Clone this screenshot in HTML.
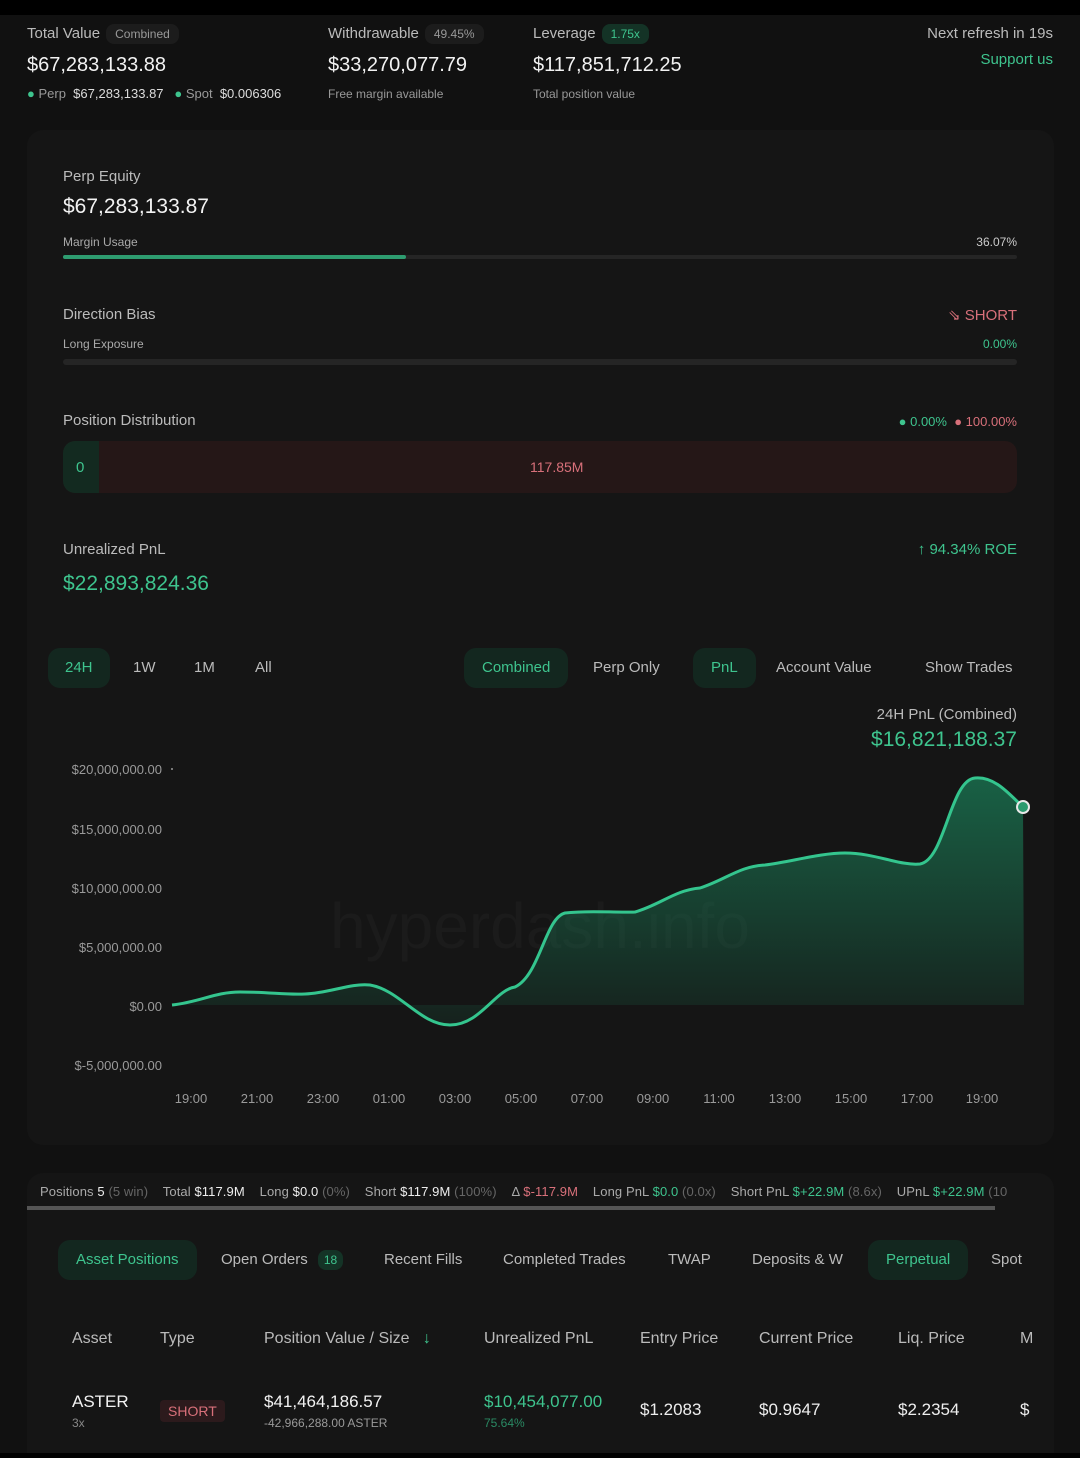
<!DOCTYPE html>
<html><head><meta charset="utf-8"><style>
*{margin:0;padding:0;box-sizing:border-box}
body{width:1080px;height:1458px;background:#111;font-family:"Liberation Sans",sans-serif;color:#e8e8e8;position:relative;overflow:hidden}
.a{position:absolute;white-space:nowrap}
.g{color:#3ec48e}.r{color:#d8707a}.m{color:#9a9a9a}
.pill{display:inline-block;border-radius:8px;padding:3px 9px;font-size:12px;margin-left:6px;background:#1c1c1c;color:#999}
.card{position:absolute;background:#151515;border-radius:16px}
.tab{position:absolute;font-size:15px;color:#bbb;height:40px;line-height:40px;padding:0 18px;border-radius:12px}
.tab.on{background:#13271f;color:#3ec48e}
</style></head><body>
<div class="a" style="left:0;top:0;width:1080px;height:15px;background:#000"></div>

<div class="a" style="left:27px;top:24px;font-size:15px;color:#bbb">Total Value<span class="pill">Combined</span></div>
<div class="a" style="left:27px;top:54px;font-size:20px;color:#f2f2f2">$67,283,133.88</div>
<div class="a" style="left:27px;top:86px;font-size:13px;color:#999"><span class="g">●</span> Perp <span style="color:#ddd">&nbsp;$67,283,133.87</span> &nbsp;&nbsp;<span class="g">●</span> Spot <span style="color:#ddd">&nbsp;$0.006306</span></div>

<div class="a" style="left:328px;top:24px;font-size:15px;color:#bbb">Withdrawable<span class="pill">49.45%</span></div>
<div class="a" style="left:328px;top:54px;font-size:20px;color:#f2f2f2">$33,270,077.79</div>
<div class="a" style="left:328px;top:87px;font-size:12px;color:#999">Free margin available</div>

<div class="a" style="left:533px;top:24px;font-size:15px;color:#bbb">Leverage<span class="pill" style="background:#143326;color:#3ec48e">1.75x</span></div>
<div class="a" style="left:533px;top:54px;font-size:20px;color:#f2f2f2">$117,851,712.25</div>
<div class="a" style="left:533px;top:87px;font-size:12px;color:#999">Total position value</div>

<div class="a" style="right:27px;top:25px;font-size:15px;color:#bbb">Next refresh in 19s</div>
<div class="a g" style="right:27px;top:51px;font-size:15px">Support us</div>

<div class="card" style="left:27px;top:130px;width:1027px;height:1015px"></div>
<div class="a" style="left:63px;top:168px;font-size:15px;color:#bbb">Perp Equity</div>
<div class="a" style="left:63px;top:195px;font-size:21px;color:#f2f2f2">$67,283,133.87</div>
<div class="a" style="left:63px;top:235px;font-size:12px;color:#aaa">Margin Usage</div>
<div class="a" style="right:63px;top:235px;font-size:12px;color:#ccc">36.07%</div>
<div class="a" style="left:63px;top:255px;width:954px;height:4px;background:#252525;border-radius:2px"><div style="width:343px;height:4px;background:#2e9c70;border-radius:2px"></div></div>

<div class="a" style="left:63px;top:306px;font-size:15px;color:#bbb">Direction Bias</div>
<div class="a r" style="right:63px;top:306px;font-size:15px">⇘ SHORT</div>
<div class="a" style="left:63px;top:337px;font-size:12px;color:#aaa">Long Exposure</div>
<div class="a g" style="right:63px;top:337px;font-size:12px">0.00%</div>
<div class="a" style="left:63px;top:359px;width:954px;height:6px;background:#252525;border-radius:3px"></div>

<div class="a" style="left:63px;top:412px;font-size:15px;color:#bbb">Position Distribution</div>
<div class="a" style="right:63px;top:414px;font-size:13px"><span class="g">● 0.00%</span> &nbsp;<span class="r">● 100.00%</span></div>
<div class="a" style="left:63px;top:441px;width:954px;height:52px;background:#251717;border-radius:12px;overflow:hidden"><div style="position:absolute;left:0;top:0;width:36px;height:52px;background:#132a20"></div></div>
<div class="a g" style="left:76px;top:459px;font-size:15px">0</div>
<div class="a r" style="left:530px;top:459px;font-size:14px">117.85M</div>

<div class="a" style="left:63px;top:541px;font-size:15px;color:#bbb">Unrealized PnL</div>
<div class="a g" style="right:63px;top:541px;font-size:15px">↑ 94.34% ROE</div>
<div class="a g" style="left:63px;top:572px;font-size:21px">$22,893,824.36</div>

<div class="tab on" style="left:48px;top:648px;padding:0 17px">24H</div>
<div class="tab" style="left:115px;top:648px">1W</div>
<div class="tab" style="left:176px;top:648px">1M</div>
<div class="tab" style="left:237px;top:648px">All</div>
<div class="tab on" style="left:464px;top:648px">Combined</div>
<div class="tab" style="left:575px;top:648px">Perp Only</div>
<div class="tab on" style="left:693px;top:648px">PnL</div>
<div class="tab" style="left:758px;top:648px">Account Value</div>
<div class="tab" style="left:907px;top:648px">Show Trades</div>

<div class="a" style="right:63px;top:706px;font-size:15px;color:#bbb">24H PnL (Combined)</div>
<div class="a g" style="right:63px;top:728px;font-size:21px">$16,821,188.37</div>

<svg class="a" style="left:0;top:0" width="1080" height="1458">
<defs><linearGradient id="gr" x1="0" y1="0" x2="0" y2="1"><stop offset="0" stop-color="#1a7a55" stop-opacity=".75"/><stop offset="1" stop-color="#1a7a55" stop-opacity=".12"/></linearGradient></defs>
<g font-family="Liberation Sans" font-size="13" fill="#9a9a9a" text-anchor="end">
<text x="162" y="774">$20,000,000.00</text><text x="162" y="834">$15,000,000.00</text><text x="162" y="893">$10,000,000.00</text><text x="162" y="952">$5,000,000.00</text><text x="162" y="1011">$0.00</text><text x="162" y="1070">$-5,000,000.00</text>
</g>
<g font-family="Liberation Sans" font-size="13" fill="#9a9a9a" text-anchor="middle">
<text x="191" y="1103">19:00</text><text x="257" y="1103">21:00</text><text x="323" y="1103">23:00</text><text x="389" y="1103">01:00</text><text x="455" y="1103">03:00</text><text x="521" y="1103">05:00</text><text x="587" y="1103">07:00</text><text x="653" y="1103">09:00</text><text x="719" y="1103">11:00</text><text x="785" y="1103">13:00</text><text x="851" y="1103">15:00</text><text x="917" y="1103">17:00</text><text x="982" y="1103">19:00</text>
</g>
<text x="540" y="948" font-family="Liberation Sans" font-size="64" fill="#1b1b1b" text-anchor="middle">hyperdash.info</text>
<path d="M172,1005 C200,1002 215,992 240,992 C270,992 285,995 305,994 C330,993 350,983 370,985 C400,990 420,1025 450,1025 C480,1025 495,990 515,987 C540,975 545,918 565,913 C590,910 615,913 635,912 C660,905 675,890 700,888 C725,880 740,866 765,865 C790,862 820,853 845,853 C875,853 900,866 920,864 C945,860 950,780 975,778 C995,776 1010,795 1023,807 L1024,1005 Z" fill="url(#gr)"/>
<path d="M172,1005 C200,1002 215,992 240,992 C270,992 285,995 305,994 C330,993 350,983 370,985 C400,990 420,1025 450,1025 C480,1025 495,990 515,987 C540,975 545,918 565,913 C590,910 615,913 635,912 C660,905 675,890 700,888 C725,880 740,866 765,865 C790,862 820,853 845,853 C875,853 900,866 920,864 C945,860 950,780 975,778 C995,776 1010,795 1023,807" fill="none" stroke="#34c58e" stroke-width="3"/>
<circle cx="1023" cy="807" r="6" fill="#2a9a6e" stroke="#e8e8e8" stroke-width="2"/>
<circle cx="172" cy="769" r="1" fill="#999"/>
</svg>

<div class="card" style="left:27px;top:1173px;width:1027px;height:285px;border-radius:16px 16px 0 0"></div>
<div class="a" style="left:40px;top:1184px;font-size:13px;color:#aaa;letter-spacing:0.1px">Positions <span style="color:#eee">5</span> <span style="color:#666">(5 win)</span> &nbsp;&nbsp; Total <span style="color:#eee">$117.9M</span> &nbsp;&nbsp; Long <span style="color:#eee">$0.0</span> <span style="color:#666">(0%)</span> &nbsp;&nbsp; Short <span style="color:#eee">$117.9M</span> <span style="color:#666">(100%)</span> &nbsp;&nbsp; Δ <span class="r">$-117.9M</span> &nbsp;&nbsp; Long PnL <span class="g">$0.0</span> <span style="color:#666">(0.0x)</span> &nbsp;&nbsp; Short PnL <span class="g">$+22.9M</span> <span style="color:#666">(8.6x)</span> &nbsp;&nbsp; UPnL <span class="g">$+22.9M</span> <span style="color:#666">(10</span></div>
<div class="a" style="left:27px;top:1206px;width:968px;height:4px;background:#555"></div>

<div class="tab on" style="left:58px;top:1240px">Asset Positions</div>
<div class="tab" style="left:203px;top:1240px">Open Orders <span style="display:inline-block;background:#143326;color:#3ec48e;border-radius:8px;font-size:12px;padding:0 6px;line-height:20px;margin-left:6px">18</span></div>
<div class="tab" style="left:366px;top:1240px">Recent Fills</div>
<div class="tab" style="left:485px;top:1240px">Completed Trades</div>
<div class="tab" style="left:650px;top:1240px">TWAP</div>
<div class="tab" style="left:734px;top:1240px">Deposits &amp; W</div>
<div class="tab on" style="left:868px;top:1240px">Perpetual</div>
<div class="tab" style="left:973px;top:1240px">Spot</div>

<div class="a" style="left:72px;top:1330px;font-size:16px;color:#bbb">Asset</div>
<div class="a" style="left:160px;top:1330px;font-size:16px;color:#bbb">Type</div>
<div class="a" style="left:264px;top:1330px;font-size:16px;color:#bbb">Position Value / Size &nbsp;&nbsp;<span class="g">↓</span></div>
<div class="a" style="left:484px;top:1330px;font-size:16px;color:#bbb">Unrealized PnL</div>
<div class="a" style="left:640px;top:1330px;font-size:16px;color:#bbb">Entry Price</div>
<div class="a" style="left:759px;top:1330px;font-size:16px;color:#bbb">Current Price</div>
<div class="a" style="left:898px;top:1330px;font-size:16px;color:#bbb">Liq. Price</div>
<div class="a" style="left:1020px;top:1330px;font-size:16px;color:#bbb">M</div>

<div class="a" style="left:72px;top:1392px;font-size:17px;color:#f2f2f2">ASTER</div>
<div class="a" style="left:72px;top:1416px;font-size:12px;color:#888">3x</div>
<div class="a r" style="left:160px;top:1400px;font-size:14px;background:#2c1a1c;padding:3px 8px;border-radius:4px">SHORT</div>
<div class="a" style="left:264px;top:1392px;font-size:17px;color:#f2f2f2">$41,464,186.57</div>
<div class="a" style="left:264px;top:1416px;font-size:12px;color:#999">-42,966,288.00 ASTER</div>
<div class="a g" style="left:484px;top:1392px;font-size:17px">$10,454,077.00</div>
<div class="a" style="left:484px;top:1416px;font-size:12px;color:#2a8a64">75.64%</div>
<div class="a" style="left:640px;top:1400px;font-size:17px;color:#eee">$1.2083</div>
<div class="a" style="left:759px;top:1400px;font-size:17px;color:#eee">$0.9647</div>
<div class="a" style="left:898px;top:1400px;font-size:17px;color:#eee">$2.2354</div>
<div class="a" style="left:1020px;top:1400px;font-size:17px;color:#eee">$</div>
<div class="a" style="left:0;top:1453px;width:1080px;height:5px;background:#000"></div>
</body></html>
